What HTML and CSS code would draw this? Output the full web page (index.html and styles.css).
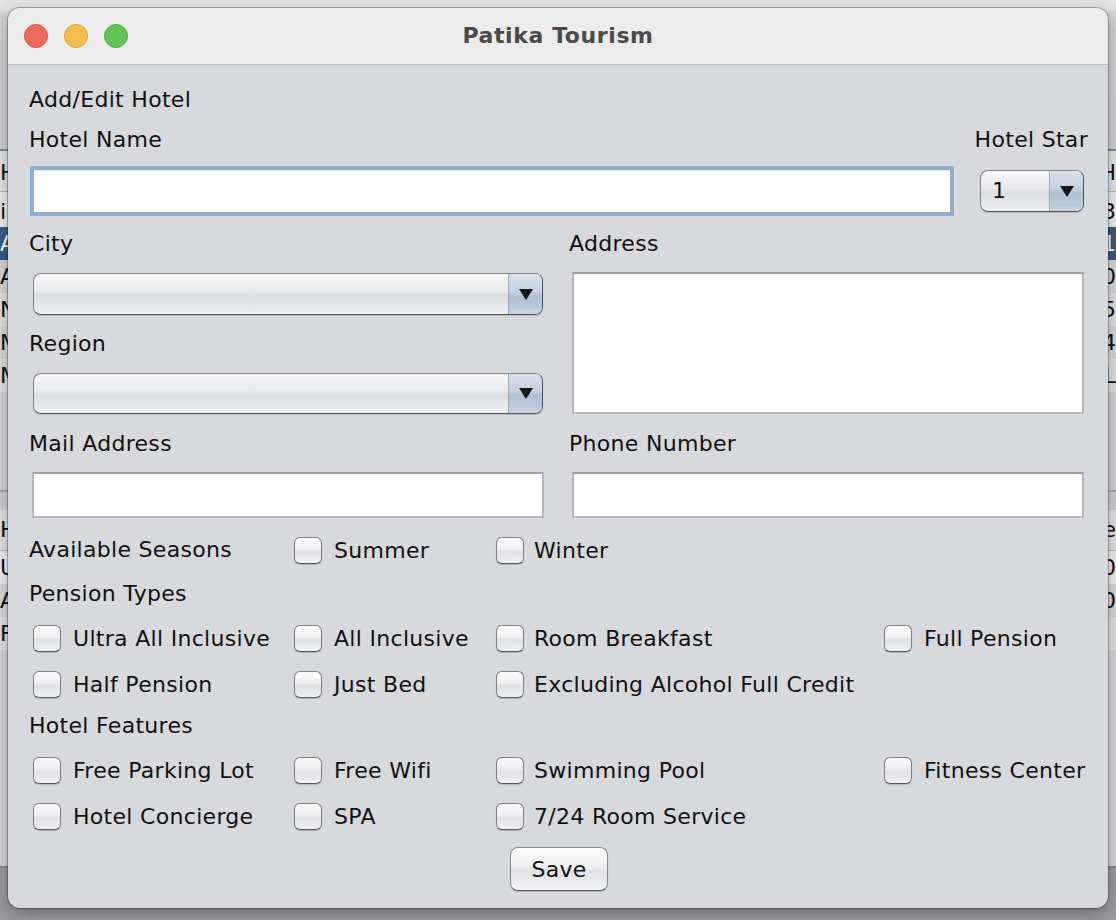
FILE: index.html
```html
<!DOCTYPE html>
<html>
<head>
<meta charset="utf-8">
<link rel="stylesheet" href="styles.css">
</head>
<body>
<div class="desk">
  <div class="bgwin">
    <div class="bg-top"></div>
    <div class="bg-table">
      <div class="bg-row bg-head"><span>H</span><span>PH</span></div>
      <div class="bg-row bg-first"><span>i</span><span>3</span></div>
      <div class="bg-row bg-sel"><span>A</span><span>1</span></div>
      <div class="bg-row bg-alt"><span>A</span><span>0</span></div>
      <div class="bg-row"><span>N</span><span>5</span></div>
      <div class="bg-row bg-alt"><span>M</span><span>4</span></div>
      <div class="bg-row"><span>M</span><span>L</span></div>
    </div>
    <div class="bg-gap"></div>
    <div class="bg-table2">
      <div class="bg-row bg-head2"><span>H</span><span>e</span></div>
      <div class="bg-row bg-first2"><span>U</span><span>0</span></div>
      <div class="bg-row bg-alt"><span>A</span><span>0</span></div>
      <div class="bg-row"><span>F</span><span></span></div>
    </div>
  </div>
</div>

<div class="window">
  <div class="titlebar">
    <div class="lights">
      <span class="light red"></span>
      <span class="light yellow"></span>
      <span class="light green"></span>
    </div>
    <div class="title">Patika Tourism</div>
    <div></div>
  </div>

  <div class="content">
    <div class="label">Add/Edit Hotel</div>

    <div class="label-row mt12">
      <span class="label">Hotel Name</span>
      <span class="label">Hotel Star</span>
    </div>

    <div class="name-row mt12">
      <div class="field focused name-field"></div>
      <div class="combo star-combo">
        <div class="combo-value">1</div>
        <div class="combo-arrow"><span class="tri"></span></div>
      </div>
    </div>

    <div class="cols mt14">
      <div class="col">
        <div class="label">City</div>
        <div class="combo wide-combo mt15">
          <div class="combo-value"></div>
          <div class="combo-arrow"><span class="tri"></span></div>
        </div>
        <div class="label mt15">Region</div>
        <div class="combo wide-combo short mt15">
          <div class="combo-value"></div>
          <div class="combo-arrow"><span class="tri"></span></div>
        </div>
      </div>
      <div class="col col-right">
        <div class="label">Address</div>
        <div class="field area mt14"></div>
      </div>
    </div>

    <div class="cols mt16">
      <div class="col">
        <div class="label">Mail Address</div>
        <div class="field line-field mt14"></div>
      </div>
      <div class="col col-right">
        <div class="label">Phone Number</div>
        <div class="field line-field mt14"></div>
      </div>
    </div>

    <div class="checks mt18">
      <div class="label">Available Seasons</div>
      <label class="check"><span class="box"></span><span>Summer</span></label>
      <label class="check c3"><span class="box"></span><span>Winter</span></label>
    </div>

    <div class="label mt16">Pension Types</div>
    <div class="checks mt16">
      <label class="check"><span class="box"></span><span>Ultra All Inclusive</span></label>
      <label class="check"><span class="box"></span><span>All Inclusive</span></label>
      <label class="check c3"><span class="box"></span><span>Room Breakfast</span></label>
      <label class="check"><span class="box"></span><span>Full Pension</span></label>
      <label class="check"><span class="box"></span><span>Half Pension</span></label>
      <label class="check"><span class="box"></span><span>Just Bed</span></label>
      <label class="check c3 span2"><span class="box"></span><span>Excluding Alcohol Full Credit</span></label>
    </div>

    <div class="label mt14">Hotel Features</div>
    <div class="checks mt16">
      <label class="check"><span class="box"></span><span>Free Parking Lot</span></label>
      <label class="check"><span class="box"></span><span>Free Wifi</span></label>
      <label class="check c3"><span class="box"></span><span>Swimming Pool</span></label>
      <label class="check"><span class="box"></span><span>Fitness Center</span></label>
      <label class="check"><span class="box"></span><span>Hotel Concierge</span></label>
      <label class="check"><span class="box"></span><span>SPA</span></label>
      <label class="check c3"><span class="box"></span><span>7/24 Room Service</span></label>
    </div>

    <button class="save mt17">Save</button>
  </div>
</div>
</body>
</html>
```

FILE: styles.css
```css
html, body {
  margin: 0;
  padding: 0;
}
body {
  width: 1116px;
  height: 920px;
  overflow: hidden;
  position: relative;
  background: #98989b;
  font-family: "DejaVu Sans", "Liberation Sans", sans-serif;
  font-size: 22px;
  letter-spacing: 0.3px;
  color: #111;
}

/* background window */
.desk {
  height: 920px;
  background: #9c9c9f;
}
.bgwin {
  height: 866px;
  background: #d6d6d8;
  border-bottom: 2px solid #8a8a8d;
}
.bg-top {
  height: 149px;
  background: linear-gradient(#e4e4e4 0, #e4e4e4 8px, #d3d3d6 14px, #d1d1d4);
}
.bg-table {
  border-top: 2px solid #7d8ea6;
  box-shadow: inset 0 4px 0 #c0c4cc;
}
.bg-row {
  display: flex;
  justify-content: space-between;
  height: 33px;
  line-height: 33px;
  background: #e2e2e2;
  overflow: hidden;
  letter-spacing: 0;
}
.bg-alt { background: #d9d9d9; }
.bg-head {
  height: 40px;
  line-height: 44px;
  background: #e6e6e6;
  border-bottom: 1px solid #b9b9bb;
}
.bg-first { height: 35px; line-height: 40px; background: #efefef; }
.bg-sel { background: #3a5c85; color: #fff; }
.bg-gap {
  height: 98px;
  background: #d4d4d6;
  border-bottom: 2px solid #a9a9ac;
}
.bg-table2 {
  border-top: 18px solid #d0d0d3;
  box-shadow: inset 0 2px 0 #aeaeb1;
}
.bg-head2 { height: 40px; line-height: 40px; background: #e3e3e3; border-bottom: 1px solid #b9b9bb; }
.bg-first2 { background: #f0f0f0; }

/* dialog window */
.window {
  position: absolute;
  left: 8px;
  top: 8px;
  width: 1100px;
  height: 900px;
  border-radius: 12px;
  overflow: hidden;
  background: #d8d9dd;
  box-shadow: 0 0 0 1px rgba(0, 0, 0, 0.28), 0 6px 18px rgba(0, 0, 0, 0.3);
}
.titlebar {
  height: 56px;
  background: #ececec;
  border-bottom: 1px solid #bdbdbd;
  display: grid;
  grid-template-columns: 1fr auto 1fr;
  align-items: center;
}
.lights {
  display: flex;
  gap: 16px;
  padding-left: 16px;
}
.light {
  width: 24px;
  height: 24px;
  border-radius: 50%;
  box-sizing: border-box;
}
.red { background: #ee695e; border: 1px solid #d65248; }
.yellow { background: #f5bf4f; border: 1px solid #d9a33b; }
.green { background: #61c555; border: 1px solid #4ea942; }
.title {
  font-weight: bold;
  font-size: 22px;
  letter-spacing: 0.6px;
  color: #4a4a4a;
  padding-bottom: 1px;
}

.content {
  display: flex;
  flex-direction: column;
  padding: 21px 21px 0 21px;
}
.label {
  height: 28px;
  line-height: 28px;
  white-space: nowrap;
}
.mt12 { margin-top: 12px; }
.mt14 { margin-top: 14px; }
.mt15 { margin-top: 15px; }
.mt16 { margin-top: 16px; }
.mt17 { margin-top: 17px; }
.mt18 { margin-top: 18px; }

.label-row {
  display: flex;
  justify-content: space-between;
}
.label-row .label:last-child { margin-right: -1px; }

.name-row {
  display: flex;
  align-items: center;
}

/* text fields */
.field {
  box-sizing: border-box;
  background: #fff;
  border: 2px solid #b6b6b8;
  border-top-color: #a3a3a6;
}
.focused {
  border: 3px solid #8db0db;
  box-shadow: inset 0 0 0 1px #a6a6a8, inset 0 2px 2px rgba(0,0,0,0.12);
}
.name-field {
  width: 924px;
  height: 50px;
  margin-left: 1px;
}
.area {
  width: 512px;
  height: 142px;
  margin-left: 3px;
}
.line-field {
  width: 512px;
  height: 46px;
  margin-left: 3px;
}

/* combo boxes */
.combo {
  box-sizing: border-box;
  display: flex;
  height: 42px;
  border: 1px solid #838488;
  border-bottom-color: #505359;
  border-right-color: #44516a;
  border-radius: 8px;
  overflow: hidden;
  background: linear-gradient(#f7f7f8, #eaebed 40%, #dcdde0 55%, #e6e7ea 80%, #f1f2f4);
  box-shadow: 0 1px 1px rgba(0, 0, 0, 0.15);
}
.combo-value {
  flex: 1;
  padding-left: 11px;
  line-height: 40px;
}
.combo-arrow {
  width: 33px;
  border-left: 1px solid #9ba6b6;
  background: linear-gradient(#d9e1ea, #c4d0df 45%, #b0c1d5 55%, #bccbdc 85%, #cbd6e3);
  display: flex;
  align-items: center;
  justify-content: center;
}
.tri {
  width: 0;
  height: 0;
  border-left: 7px solid transparent;
  border-right: 7px solid transparent;
  border-top: 11px solid #161616;
}
.star-combo {
  width: 104px;
  margin-left: 26px;
}
.wide-combo {
  width: 510px;
  margin-left: 4px;
}
.short { height: 41px; }

.cols {
  display: flex;
  gap: 24px;
}
.col {
  width: 516px;
  display: flex;
  flex-direction: column;
}
.col-right { width: 518px; }

/* checkboxes */
.checks {
  display: grid;
  grid-template-columns: 261px 202px 388px 1fr;
  row-gap: 18px;
  align-items: center;
}
.check {
  display: flex;
  align-items: center;
  gap: 12px;
  margin-left: 4px;
  height: 28px;
  white-space: nowrap;
}
.c3 { gap: 10px; }
.span2 { grid-column: span 2; }
.box {
  box-sizing: border-box;
  width: 28px;
  height: 27px;
  border: 1px solid #808084;
  border-bottom-color: #55575c;
  border-radius: 6px;
  background: linear-gradient(#fdfdfd, #eeeef0 45%, #e0e1e4 55%, #eaebed 85%, #f4f4f6);
  box-shadow: 0 1px 1px rgba(0, 0, 0, 0.18);
  flex: none;
}

.save {
  align-self: center;
  width: 98px;
  height: 44px;
  box-sizing: border-box;
  border: 1px solid #8a8a8e;
  border-bottom-color: #5a5c62;
  border-radius: 8px;
  background: linear-gradient(#fdfdfd, #efeff1 45%, #e2e3e6 55%, #ebecee 85%, #f5f5f7);
  box-shadow: 0 1px 1px rgba(0, 0, 0, 0.18);
  font-family: "DejaVu Sans", "Liberation Sans", sans-serif;
  font-size: 22px;
  letter-spacing: 0.3px;
  color: #111;
  padding: 0;
  margin-left: 2px;
}
```
